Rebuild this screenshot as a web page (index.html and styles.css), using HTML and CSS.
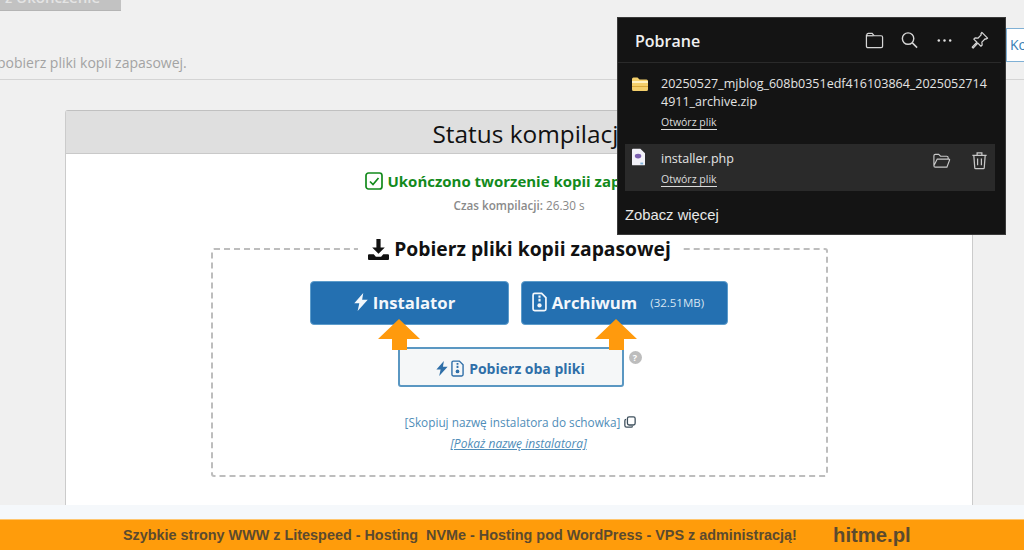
FILE: index.html
```html
<!DOCTYPE html>
<html lang="pl">
<head>
<meta charset="utf-8">
<title>Status kompilacji</title>
<link rel="stylesheet" href="styles.css">
</head>
<body>
<div class="page">
  <main class="main">
    <div class="topbar">
      <div class="stub-btn"><span>z Ukończenie</span></div>
      <p class="intro">pobierz pliki kopii zapasowej.</p>
    </div>
    <section class="panel">
      <h1 class="panel-title">Status kompilacji</h1>
      <div class="panel-body">
        <p class="done">
          <svg class="done-icon" viewBox="0 0 18 18"><rect x="1" y="1" width="16" height="16" rx="2.5" fill="none" stroke="#138a1c" stroke-width="1.7"/><path d="M5 9.5l3 3 5.5-6.5" fill="none" stroke="#138a1c" stroke-width="1.7"/></svg>
          Ukończono tworzenie kopii zapasowej
        </p>
        <p class="time"><b>Czas kompilacji:</b> 26.30 s</p>
        <fieldset class="files">
          <legend class="files-title">
            <svg class="dl-icon" viewBox="0 0 20 20"><path d="M8 0h4v8h4l-6 6-6-6h4z" fill="#111"/><path d="M1 14.500h4.500l2 2.500h5l2-2.500H19a1 1 0 0 1 1 1V19a1 1 0 0 1-1 1H1a1 1 0 0 1-1-1v-3.500a1 1 0 0 1 1-1z" fill="#111"/></svg>
            Pobierz pliki kopii zapasowej
          </legend>
          <div class="btn-row">
            <a class="btn btn-inst">
              <svg class="ico-bolt" viewBox="0 0 12 16"><path d="M8 0L0 9h4.500L3 16l9-10H7z" fill="currentColor"/></svg>
              Instalator
            </a>
            <a class="btn btn-arch">
              <svg class="ico-file" viewBox="0 0 14 18"><path d="M2.500 1H9l4 4v10.500a1.500 1.500 0 0 1-1.500 1.500h-9A1.500 1.500 0 0 1 1 15.500v-13A1.500 1.500 0 0 1 2.500 1z" fill="none" stroke="currentColor" stroke-width="1.600"/><path d="M6 3h2v2H6zM6 6h2v2.500H6z" fill="currentColor"/><circle cx="7" cy="12.200" r="2" fill="currentColor"/></svg>
              Archiwum
              <small class="size">(32.51MB)</small>
            </a>
          </div>
          <div class="both-row">
            <a class="btn-both">
              <svg class="ico-bolt-s" viewBox="0 0 12 16"><path d="M8 0L0 9h4.500L3 16l9-10H7z" fill="currentColor"/></svg>
              <svg class="ico-file-s" viewBox="0 0 14 18"><path d="M2.500 1H9l4 4v10.500a1.500 1.500 0 0 1-1.500 1.500h-9A1.500 1.500 0 0 1 1 15.500v-13A1.500 1.500 0 0 1 2.500 1z" fill="none" stroke="currentColor" stroke-width="1.500"/><path d="M6 3h2v2H6zM6 6h2v2.500H6z" fill="currentColor"/><circle cx="7" cy="12.200" r="2" fill="currentColor"/></svg>
              Pobierz oba pliki
            </a>
            <span class="help">?</span>
          </div>
          <p class="copy">[Skopiuj nazwę instalatora do schowka]
            <svg class="ico-copy" viewBox="0 0 14 14"><rect x="4" y="1" width="9" height="9.500" rx="2" fill="none" stroke="#3d4f5c" stroke-width="1.500"/><path d="M2.500 4A1.500 1.500 0 0 0 1 5.500V11a2 2 0 0 0 2 2h5.500A1.500 1.500 0 0 0 10 12" fill="none" stroke="#3d4f5c" stroke-width="1.500"/></svg>
          </p>
          <p class="show"><a>[Pokaż nazwę instalatora]</a></p>
        </fieldset>
      </div>
    </section>
  </main>
  <div class="strip"></div>
  <footer class="promo">
    <span class="promo-text">Szybkie strony WWW z Litespeed - Hosting&nbsp; NVMe - Hosting pod WordPress - VPS z administracją!</span>
    <span class="promo-brand">hitme.pl</span>
  </footer>
</div>

<div class="ko-btn">Ko</div>

<svg class="arrow arrow-a" viewBox="0 0 42 31"><path d="M21 0l21 20H29v11H14V20H0z" fill="#ff9a0d"/></svg>
<svg class="arrow arrow-b" viewBox="0 0 42 31"><path d="M21 0l21 20H29v11H14V20H0z" fill="#ff9a0d"/></svg>

<aside class="downloads">
  <header class="dl-head">
    <h2 class="dl-title">Pobrane</h2>
    <div class="dl-tools">
      <svg class="tool" viewBox="0 0 20 20"><path d="M2 5.500V4a1.500 1.500 0 0 1 1.500-1.500h4L9.500 5H17a1.500 1.500 0 0 1 1.500 1.500V16a1.500 1.500 0 0 1-1.500 1.500H3A1.500 1.500 0 0 1 1.500 16V4" fill="none" stroke="#d6d6d6" stroke-width="1.300"/><path d="M2 5h7" stroke="#d6d6d6" stroke-width="1.300"/></svg>
      <svg class="tool" viewBox="0 0 20 20"><circle cx="8.500" cy="8" r="6" fill="none" stroke="#d6d6d6" stroke-width="1.500"/><path d="M13 12.500l5 5" stroke="#d6d6d6" stroke-width="1.500"/></svg>
      <svg class="tool" viewBox="0 0 20 20"><circle cx="4" cy="10" r="1.300" fill="#e0e0e0"/><circle cx="10" cy="10" r="1.300" fill="#e0e0e0"/><circle cx="16" cy="10" r="1.300" fill="#e0e0e0"/></svg>
      <svg class="tool" viewBox="0 0 20 20"><path d="M12.500 1.500l6 6-1.500 1-1-.3-3.500 3.500.3 3-1.300 1.300-3.200-3.200-5 5.200-1-1 5-5.200-3.300-3.200L5.300 7.300l3 .3 3.500-3.500-.3-1z" fill="none" stroke="#d6d6d6" stroke-width="1.300" stroke-linejoin="round"/></svg>
    </div>
  </header>
  <div class="dl-item">
    <svg class="file-ico" viewBox="0 0 16 14"><path d="M0 2a1.500 1.500 0 0 1 1.500-1.500h4L7.500 2.500h7A1.500 1.500 0 0 1 16 4v8.500a1.500 1.500 0 0 1-1.500 1.500h-13A1.500 1.500 0 0 1 0 12.500z" fill="#f4cf6b"/><path d="M0 4h16v2H0z" fill="#fff1c2"/><path d="M0 9h16v1H0z" fill="#d9a83c"/></svg>
    <div class="dl-text">
      <div class="dl-name">20250527_mjblog_608b0351edf416103864_20250527144911_archive.zip</div>
      <a class="dl-open">Otwórz plik</a>
    </div>
  </div>
  <div class="dl-item dl-active">
    <svg class="file-ico file-php" viewBox="0 0 14 18"><path d="M1 0h8l5 5v12a1 1 0 0 1-1 1H1a1 1 0 0 1-1-1V1a1 1 0 0 1 1-1z" fill="#f2f1f8"/><ellipse cx="6.500" cy="8" rx="3.500" ry="2.500" fill="#7b5fb0"/><path d="M9 15h3v2H9z" fill="#7fb2d9"/></svg>
    <div class="dl-text">
      <div class="dl-name">installer.php</div>
      <a class="dl-open">Otwórz plik</a>
    </div>
    <div class="dl-actions">
      <svg class="tool" viewBox="0 0 20 20"><path d="M2 15.500V5a1.500 1.500 0 0 1 1.500-1.500H7L9 5.500h6.500A1.500 1.500 0 0 1 17 7v1.500M2 15.500A1.500 1.500 0 0 0 3.500 17h12.200L18.500 9.500a.7.7 0 0 0-.7-1H5.500z" fill="none" stroke="#c8c8c8" stroke-width="1.200"/></svg>
      <svg class="tool" viewBox="0 0 20 20"><path d="M2.500 4.500h15M7.500 4.500V2h5v2.500M4 4.500l1 13a1 1 0 0 0 1 1h8a1 1 0 0 0 1-1l1-13M8 8v7M12 8v7" fill="none" stroke="#c8c8c8" stroke-width="1.300"/></svg>
    </div>
  </div>
  <a class="dl-more">Zobacz więcej</a>
</aside>
</body>
</html>
```
FILE: styles.css
```css
* { box-sizing: border-box; }
html, body { margin: 0; height: 550px; overflow: hidden; }
body { position: relative; font-family: "Open Sans", "Noto Sans", sans-serif; background: #f0f0f0; color: #111; }
p, h1, h2 { margin: 0; }
.page { display: flex; flex-direction: column; height: 550px; }
.main { height: 505px; overflow: hidden; flex: none; }
.topbar { height: 80px; border-bottom: 1px solid #d4d4d4; overflow: hidden; }
.stub-btn { width: 121px; height: 11px; background: #c2c2c2; border-bottom: 1px solid #b4b4b4; color: #e4e4e4; font-size: 15px; font-weight: 600; line-height: 11px; padding-left: 5px; overflow: hidden; }
.stub-btn span { display: block; margin-top: -8px; }
.intro { margin: 42px 0 0 -3px; font-size: 14px; line-height: 20px; color: #a3a3a3; }
.panel { margin: 30px 0 0 65px; width: 908px; height: 400px; background: #fff; border: 1px solid #cbcbcb; border-top-color: #c0c0c0; border-radius: 3px 3px 0 0; }
.panel-title { height: 43px; background: #dfdfdf; border-bottom: 1px solid #c9c9c9; padding-left: 19px; text-align: center; font-size: 24.400px; font-weight: 500; line-height: 45px; color: #111; }
.panel-body { display: flex; flex-direction: column; align-items: center; }
.done { display: flex; align-items: center; gap: 4px; margin-top: 15px; font-size: 15px; font-weight: 700; line-height: 24px; color: #138a1c; }
.done-icon { width: 18px; height: 18px; }
.time { margin-top: 3px; font-size: 11.700px; line-height: 18px; color: #888; }
.time b { font-weight: 600; color: #8a8a8a; }
.files { width: 617px; height: 241px; margin: 22px 0 0 1px; padding: 0; border: 2px dashed #bdbdbd; border-radius: 3px; display: flex; flex-direction: column; align-items: center; }
.files-title { display: flex; align-items: center; gap: 5px; margin: 0 auto; padding: 0 10px; font-size: 19.300px; font-weight: 700; line-height: 26px; color: #111; }
.dl-icon { width: 21px; height: 21px; }
.btn-row { display: flex; gap: 12px; margin-top: 19px; margin-left: -2px; }
.btn { display: flex; align-items: center; justify-content: center; gap: 5px; height: 44px; padding-bottom: 2px; background: #2470b1; border: 1px solid #5d9ccb; border-radius: 4px; color: #f3f7fb; font-size: 16.700px; font-weight: 700; }
.btn-inst { width: 199px; padding-right: 9px; }
.btn-arch { width: 207px; padding-right: 12px; }
.ico-bolt { width: 14px; height: 18px; }
.ico-file { width: 15px; height: 20px; }
.size { margin-left: 8px; font-size: 11.500px; font-weight: 400; color: #d7e5f1; }
.both-row { position: relative; display: flex; margin-top: 22px; margin-left: -18px; }
.btn-both { display: flex; align-items: center; justify-content: center; gap: 3px; width: 226px; height: 40px; padding-top: 2px; background: #f5f7f8; border: 2px solid #5a97c2; border-radius: 3px; color: #2f6fa8; font-size: 14px; font-weight: 700; }
.ico-bolt-s { width: 12px; height: 15px; }
.ico-file-s { width: 13px; height: 17px; margin-right: 2px; }
.help { position: absolute; left: 231px; top: 4px; width: 13px; height: 13px; border-radius: 50%; background: #bdbdbd; color: #fff; font-size: 9px; font-weight: 700; line-height: 13px; text-align: center; }
.copy { display: flex; align-items: center; gap: 4px; margin-top: 25px; margin-left: 2px; font-size: 11.800px; line-height: 20px; color: #4f8db8; }
.ico-copy { width: 12px; height: 12px; }
.show { margin-top: 2px; margin-left: -2px; font-size: 12px; line-height: 20px; font-style: italic; color: #4f8db8; }
.show a { text-decoration: underline; }
.strip { height: 14px; flex: none; background: #f5f8fb; }
.promo { flex: 1; position: relative; display: flex; align-items: center; background: #ff9c0b; border-top: 1px solid #ffc66e; padding-left: 123px; font-family: "Liberation Sans", Arial, sans-serif; font-weight: 700; color: #5b4a2e; }
.promo-text { font-size: 14.400px; width: 710px; white-space: nowrap; }
.promo-brand { font-size: 20.300px; }
.ko-btn { position: absolute; left: 1006px; top: 28px; width: 40px; height: 34px; background: #fff; border: 1px solid #7fb0d5; color: #3a7fb5; font-size: 14px; line-height: 32px; padding-left: 3px; }
.arrow { position: absolute; top: 319px; width: 42px; height: 31px; }
.arrow-a { left: 378px; }
.arrow-b { left: 595px; }
.downloads { position: absolute; left: 617px; top: 17px; width: 389px; height: 218px; background: #141414; border: 1px solid #3a3a3a; color: #e6e6e6; display: flex; flex-direction: column; }
.dl-head { display: flex; align-items: center; justify-content: space-between; height: 45px; margin: 0 4px 0 0; border-bottom: 1px solid #2a2a2a; padding: 2px 12px 0 17px; flex: none; }
.dl-title { font-size: 16px; font-weight: 600; color: #f0f0f0; }
.dl-tools { display: flex; gap: 16px; margin-top: -2px; }
.tool { width: 19px; height: 19px; display: block; }
.dl-item { display: flex; flex: none; margin: 0 10px 0 7px; padding: 6px 0 0 7px; }
.file-ico { width: 16px; height: 14px; flex: none; margin: 8px 13px 0 0; }
.file-php { height: 18px; width: 13px; margin: -2px 16px 0 0; }
.dl-text { flex: 1; padding-top: 6px; }
.dl-name { width: 330px; font-size: 12.500px; line-height: 18px; word-break: break-all; color: #e4e4e4; }
.dl-open { display: block; width: fit-content; margin-top: 4px; font-size: 10.500px; line-height: 14px; color: #dcdcdc; border-bottom: 1px solid #dcdcdc; }
.dl-active { position: relative; height: 47px; margin-top: 14px; background: #2a2a2a; padding-top: 6px; }
.dl-active .dl-text { padding-top: 0; }
.dl-actions { position: absolute; right: 6px; top: 7px; display: flex; gap: 19px; }
.dl-more { margin: 14px 0 0 7px; font-family: "Liberation Sans", Arial, sans-serif; font-size: 14.800px; line-height: 20px; color: #e8e8e8; }
```
